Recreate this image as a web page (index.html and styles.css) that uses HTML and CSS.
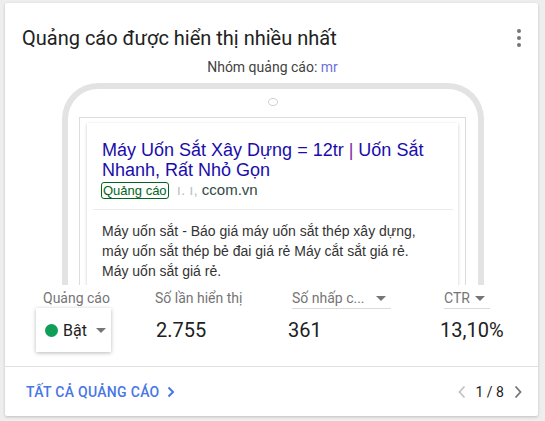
FILE: index.html
```html
<!DOCTYPE html>
<html lang="vi">
<head>
    <meta charset="UTF-8">
    <meta name="viewport" content="width=device-width, initial-scale=1.0">
    <title>Quảng cáo được hiển thị nhiều nhất</title>
    <link rel="stylesheet" href="styles.css">
</head>
<body>
    <div class="card">
        <div class="card-header">
            <h2>Quảng cáo được hiển thị nhiều nhất</h2>
            <button class="menu-btn" aria-label="Thêm">
                <svg width="24" height="24" viewBox="0 0 24 24">
                    <circle cx="12" cy="5" r="2" fill="#757575"/>
                    <circle cx="12" cy="12" r="2" fill="#757575"/>
                    <circle cx="12" cy="19" r="2" fill="#757575"/>
                </svg>
            </button>
        </div>
        <p class="subtitle">Nhóm quảng cáo: <span class="group-link">mr</span></p>

        <div class="preview">
            <div class="phone">
                <div class="camera"></div>
                <div class="screen">
                    <div class="ad">
                        <div class="ad-title">Máy Uốn Sắt Xây Dựng = 12tr <span class="pipe">|</span> Uốn Sắt Nhanh, Rất Nhỏ Gọn</div>
                        <div class="ad-url"><span class="badge">Quảng cáo</span> <span class="faded">ı. ı,</span> ccom.vn</div>
                        <div class="ad-divider"></div>
                        <div class="ad-desc">Máy uốn sắt - Báo giá máy uốn sắt thép xây dựng, máy uốn sắt thép bẻ đai giá rẻ Máy cắt sắt giá rẻ. Máy uốn sắt giá rẻ.</div>
                    </div>
                </div>
            </div>
        </div>

        <div class="metrics">
            <div class="metric">
                <div class="label label-first">Quảng cáo</div>
                <div class="status-chip">
                    <span class="dot"></span>
                    <span class="status-text">Bật</span>
                    <span class="caret"></span>
                </div>
            </div>
            <div class="metric">
                <div class="label">Số lần hiển thị</div>
                <div class="value value-shift">2.755</div>
            </div>
            <div class="metric">
                <div class="label label-sort label-clicks"><span class="label-text">Số nhấp c...</span><span class="caret"></span></div>
                <div class="value">361</div>
            </div>
            <div class="metric">
                <div class="label label-sort label-ctr"><span class="label-text">CTR</span><span class="caret"></span></div>
                <div class="value">13,10%</div>
            </div>
        </div>

        <div class="card-footer">
            <a class="all-link" href="#">TẤT CẢ QUẢNG CÁO
                <svg width="8" height="12" viewBox="0 0 8 12"><path d="M1.5 1.5 L6 6 L1.5 10.5" fill="none" stroke="#4776e6" stroke-width="2"/></svg>
            </a>
            <div class="pager">
                <svg class="pager-prev" width="8" height="14" viewBox="0 0 8 14"><path d="M6.5 1.5 L1.5 7 L6.5 12.5" fill="none" stroke="#c4c4c4" stroke-width="1.8"/></svg>
                <span class="pager-text">1 / 8</span>
                <svg class="pager-next" width="8" height="14" viewBox="0 0 8 14"><path d="M1.5 1.5 L6.5 7 L1.5 12.5" fill="none" stroke="#757575" stroke-width="1.8"/></svg>
            </div>
        </div>
    </div>
</body>
</html>
```

FILE: styles.css
```css
:root {
    --text-dark: #212121;
    --text-grey: #757575;
    --line: #e0e0e0;
    --blue: #4776e6;
    --ad-blue: #1a0dab;
    --ad-green: #006621;
}

* {
    margin: 0;
    padding: 0;
    box-sizing: border-box;
}

body {
    background: #eeeeee;
    padding: 3px 7px 5px 5px;
    font-family: Roboto, 'Noto Sans', sans-serif;
    color: var(--text-dark);
}

.card {
    width: 533px;
    height: 413px;
    background: #ffffff;
    border-radius: 2px;
    box-shadow: 0 1px 3px rgba(0, 0, 0, 0.2);
    display: flex;
    flex-direction: column;
}

.card-header {
    display: flex;
    justify-content: space-between;
    align-items: center;
    padding: 21px 7px 0 17px;
    height: 49px;
}

.card-header h2 {
    font-size: 20px;
    font-weight: 400;
    line-height: 28px;
    color: var(--text-dark);
}

.menu-btn {
    border: none;
    background: none;
    width: 24px;
    height: 24px;
    display: flex;
}

.subtitle {
    margin-top: 6px;
    text-align: center;
    font-size: 14px;
    line-height: 18px;
    color: #424242;
    padding-left: 2px;
}

.group-link {
    color: #6f6fe0;
}

/* phone mockup, cut off by the metrics row */
.preview {
    margin-top: 7px;
    height: 202px;
    overflow: hidden;
}

.phone {
    width: 422px;
    height: 240px;
    margin-left: 57px;
    border: 6px solid #e3e3e3;
    border-bottom: none;
    border-radius: 36px 36px 0 0;
    display: flex;
    flex-direction: column;
    align-items: center;
}

.camera {
    width: 10px;
    height: 10px;
    margin-top: 9px;
    border: 1px solid #d0d0d0;
    border-radius: 50%;
}

.screen {
    align-self: stretch;
    margin: 11px 12px 0 11px;
    padding: 5px 7px 0;
    border: 1px solid #dcdcdc;
    border-bottom: none;
    flex: 1;
}

.ad {
    background: #ffffff;
    box-shadow: 0 1px 3px rgba(0, 0, 0, 0.22);
    padding-top: 17px;
    font-family: 'Liberation Sans', Arial, sans-serif;
    height: 200px;
}

.ad-title {
    max-width: 335px;
    margin-left: 15px;
    font-size: 18px;
    line-height: 20px;
    color: var(--ad-blue);
}

.pipe {
    color: #7b2aa8;
}

.ad-url {
    margin-left: 14px;
    font-size: 15px;
    line-height: 20px;
    color: #2f4b45;
}

.badge {
    display: inline-block;
    border: 1px solid var(--ad-green);
    border-radius: 3px;
    color: var(--ad-green);
    font-size: 13px;
    line-height: 15px;
    padding: 0 1px;
}

.faded {
    color: #b8c2c2;
    margin-left: 4px;
}

.ad-divider {
    height: 1px;
    background: #ebebeb;
    margin: 9px 5px 0 6px;
}

.ad-desc {
    max-width: 320px;
    margin: 11px 0 0 15px;
    font-size: 14px;
    line-height: 20px;
    color: #333333;
}

/* metrics row */
.metrics {
    display: grid;
    grid-template-columns: 119px 133px 152px 1fr;
    padding: 3px 0 14px 31px;
    border-bottom: 1px solid var(--line);
}

.label {
    font-size: 14px;
    line-height: 20px;
    height: 21px;
    color: var(--text-grey);
    white-space: nowrap;
}

.label-first {
    padding-left: 7px;
}

.label-sort {
    display: flex;
    align-items: center;
    margin-left: 4px;
    border-bottom: 1px solid #dadada;
}

.label-clicks {
    width: 99px;
}

.label-ctr {
    width: 46px;
}

.label-text {
    overflow: hidden;
}

.label-sort .caret {
    margin-left: auto;
    margin-right: 5px;
}

.caret {
    width: 0;
    height: 0;
    border-left: 5px solid transparent;
    border-right: 5px solid transparent;
    border-top: 5px solid var(--text-grey);
}

.value {
    font-size: 20px;
    line-height: 44px;
    color: var(--text-dark);
    margin-top: -1px;
}

.value-shift {
    padding-left: 1px;
}

.status-chip {
    width: 75px;
    height: 44px;
    margin-top: -1px;
    display: flex;
    align-items: center;
    padding-left: 9px;
    background: #ffffff;
    box-shadow: 0 1px 4px rgba(0, 0, 0, 0.28);
}

.dot {
    width: 13px;
    height: 13px;
    border-radius: 50%;
    background: #0f9d58;
}

.status-text {
    font-size: 16px;
    margin-left: 5px;
    color: var(--text-dark);
}

.status-chip .caret {
    margin-left: 9px;
}

/* footer */
.card-footer {
    flex: 1;
    display: flex;
    justify-content: space-between;
    align-items: center;
    padding: 0 16px 0 21px;
}

.all-link {
    display: flex;
    align-items: center;
    gap: 7px;
    color: var(--blue);
    font-size: 14px;
    font-weight: 500;
    text-decoration: none;
    letter-spacing: 0.3px;
}

.pager {
    display: flex;
    align-items: center;
}

.pager-text {
    font-size: 14px;
    margin: 0 10px;
    color: var(--text-dark);
}
```
